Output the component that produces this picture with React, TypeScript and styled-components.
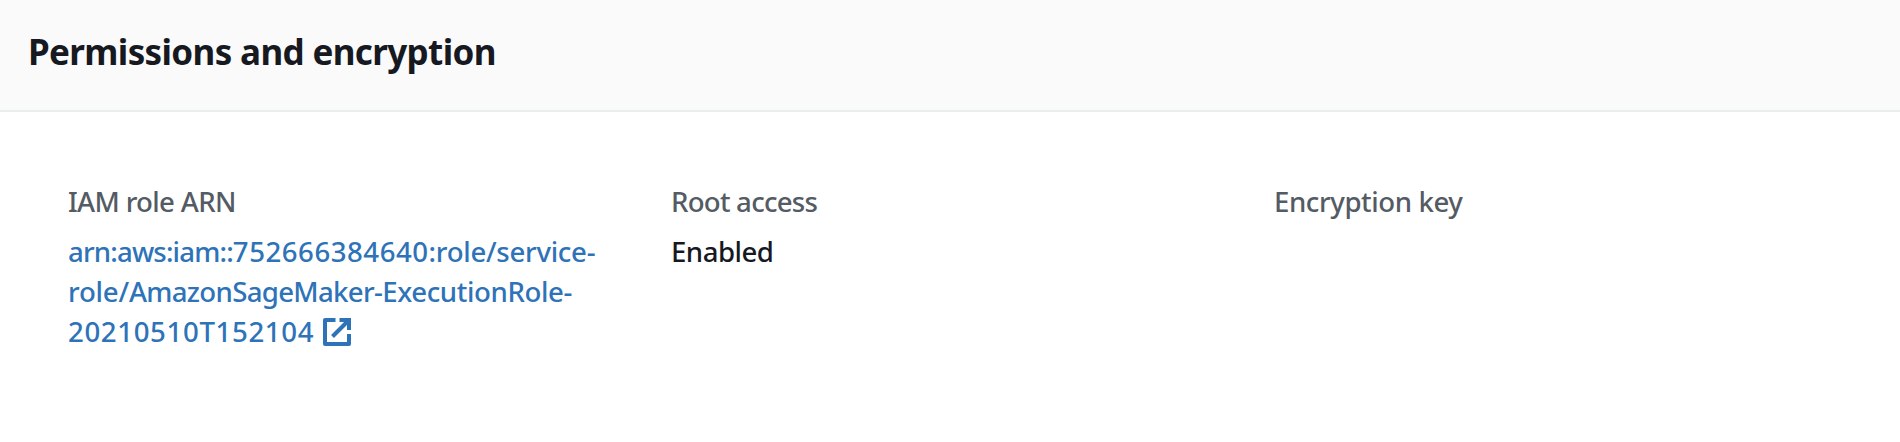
import React from "react";
import styled, { createGlobalStyle } from "styled-components";

const Global = createGlobalStyle`
  body { margin: 0; background: #fff; }
  * { box-sizing: border-box; }
`;

const Panel = styled.section`
  height: 442px;
  overflow: hidden;
  font-family: "Noto Sans", sans-serif;
  font-weight: 500;
  color: #16191f;
  background: #fff;
`;

const Header = styled.header`
  height: 112px;
  padding: 29px 28px 0;
  background: #fafafa;
  border-bottom: 2px solid #eaeded;
`;

const Title = styled.h2`
  margin: 0;
  font-size: 35px;
  line-height: 45px;
  font-weight: 700;
  letter-spacing: -0.64px;
  white-space: nowrap;
`;

const Columns = styled.div`
  display: grid;
  grid-template-columns: 603px 603px 1fr;
  padding: 69px 0 0 68px;
`;

const Label = styled.div<{ $tracking: number }>`
  font-size: 27.6px;
  line-height: 40px;
  color: #545b64;
  letter-spacing: ${(p) => p.$tracking}px;
`;

const Value = styled.div`
  margin-top: 10px;
  font-size: 27.6px;
  line-height: 40px;
`;

const Track = styled.span<{ $by: number }>`
  letter-spacing: ${(p) => p.$by}px;
`;

const Link = styled.a`
  color: #2e73b8;
  text-decoration: none;
`;

const Line = styled.span`
  display: flex;
  align-items: center;
  height: 40px;
  white-space: nowrap;
`;

const Icon = styled.svg`
  display: block;
  width: 28px;
  height: 28px;
  margin: 2px 0 0 8.6px;
`;

const ExternalIcon = () => (
  <Icon viewBox="0 0 28 28" fill="none" stroke="currentColor" strokeWidth="4" aria-hidden="true">
    <path d="M12.5 2H2V26H26V16" strokeLinejoin="round" />
    <path d="M16.5 2H26V12" />
    <path d="M9.5 18.5L25 3" />
  </Icon>
);

export default function App() {
  return (
    <Panel>
      <Global />
      <Header>
        <Title>Permissions and encryption</Title>
      </Header>
      <Columns>
        <div>
          <Label $tracking={-0.67}>IAM role ARN</Label>
          <Value>
            <Link>
              <Line>
                <Track $by={-0.83}>arn:aws:iam::</Track>
                <Track $by={0.53}>752666384640</Track>
                <Track $by={-0.28}>:role/service-</Track>
              </Line>
              <Line>
                <Track $by={-0.2}>role/</Track>
                <Track $by={-0.68}>AmazonSageMaker-</Track>
                <Track $by={-0.38}>ExecutionRole-</Track>
              </Line>
              <Line>
                <Track $by={0.64}>20210510T152104</Track>
                <ExternalIcon />
              </Line>
            </Link>
          </Value>
        </div>
        <div>
          <Label $tracking={-0.76}>Root access</Label>
          <Value>
            <Track $by={-0.5}>Enabled</Track>
          </Value>
        </div>
        <div>
          <Label $tracking={-0.41}>Encryption key</Label>
        </div>
      </Columns>
    </Panel>
  );
}
